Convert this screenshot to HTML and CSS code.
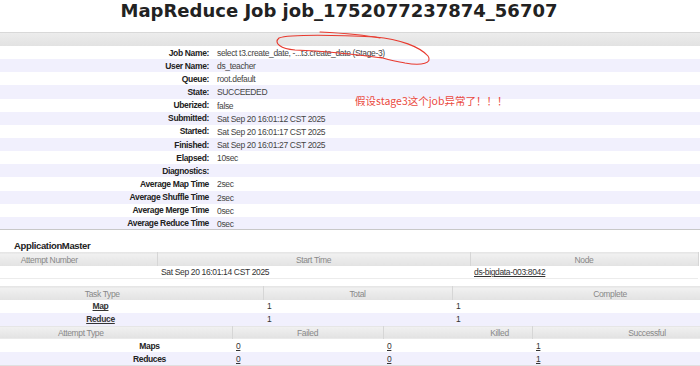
FILE: index.html
```html
<!DOCTYPE html>
<html lang="en">
<head>
  <meta charset="UTF-8">
  <meta name="viewport" content="width=device-width, initial-scale=1.0">
  <title>MapReduce Job job_1752077237874_56707</title>
  <link rel="stylesheet" href="styles.css">
</head>
<body>
  <div class="page">
    <h1 class="title">MapReduce Job job_1752077237874_56707</h1>

    <div class="info">
      <div class="info-head"></div>
      <table class="info-table">
        <tr><th>Job Name:</th><td>select t3.create_date, -...t3.create_date (Stage-3)</td></tr>
        <tr class="odd"><th>User Name:</th><td>ds_teacher</td></tr>
        <tr><th>Queue:</th><td>root.default</td></tr>
        <tr class="odd"><th>State:</th><td>SUCCEEDED</td></tr>
        <tr><th>Uberized:</th><td>false</td></tr>
        <tr class="odd"><th>Submitted:</th><td>Sat Sep 20 16:01:12 CST 2025</td></tr>
        <tr><th>Started:</th><td>Sat Sep 20 16:01:17 CST 2025</td></tr>
        <tr class="odd"><th>Finished:</th><td>Sat Sep 20 16:01:27 CST 2025</td></tr>
        <tr><th>Elapsed:</th><td>10sec</td></tr>
        <tr class="odd"><th>Diagnostics:</th><td></td></tr>
        <tr><th>Average Map Time</th><td>2sec</td></tr>
        <tr class="odd"><th>Average Shuffle Time</th><td>2sec</td></tr>
        <tr><th>Average Merge Time</th><td>0sec</td></tr>
        <tr class="odd"><th>Average Reduce Time</th><td>0sec</td></tr>
      </table>
    </div>

    <div class="am">
      <h3 class="am-title">ApplicationMaster</h3>
      <table class="grid am-table">
        <colgroup><col style="width:157px"><col style="width:313px"><col style="width:228px"></colgroup>
        <tr class="head"><th class="first">Attempt Number</th><th>Start Time</th><th>Node</th></tr>
        <tr class="last"><td></td><td>Sat Sep 20 16:01:14 CST 2025</td><td><a href="#">ds-bigdata-003:8042</a></td></tr>
      </table>
    </div>

    <div class="jobs">
      <table class="grid task-table">
        <colgroup><col style="width:263px"><col style="width:189px"><col style="width:316px"></colgroup>
        <tr class="head"><th class="first">Task Type</th><th>Total</th><th>Complete</th></tr>
        <tr><th class="name"><a href="#">Map</a></th><td>1</td><td>1</td></tr>
        <tr class="odd"><th class="name"><a href="#">Reduce</a></th><td>1</td><td>1</td></tr>
      </table>
      <table class="grid attempt-table">
        <colgroup><col style="width:232px"><col style="width:151px"><col style="width:149px"><col style="width:230px"></colgroup>
        <tr class="head"><th class="first wide">Attempt Type</th><th>Failed</th><th class="killed">Killed</th><th>Successful</th></tr>
        <tr><th class="kind">Maps</th><td><a href="#">0</a></td><td><a href="#">0</a></td><td><a href="#">1</a></td></tr>
        <tr class="odd"><th class="kind">Reduces</th><td><a href="#">0</a></td><td><a href="#">0</a></td><td><a href="#">1</a></td></tr>
      </table>
    </div>

    <svg class="scribble" width="700" height="366" viewBox="0 0 700 366">
      <path d="M382 58 C360 55, 320 51, 295 50 C281 49, 273 43, 279 38 C289 34, 340 35, 375 37 C400 39, 420 47, 428 56 C433 63, 422 66, 405 63 C395 61, 388 60, 380 57" />
      <path d="M320 32 C340 33, 360 34, 380 38" />
    </svg>
    <div class="note">假设stage3这个job异常了！！！</div>
  </div>
</body>
</html>
```

FILE: styles.css
```css
html, body {
  margin: 0;
  padding: 0;
  background-color: #fff;
  overflow: hidden;
}

.page {
  position: relative;
  width: 700px;
  height: 366px;
  overflow: hidden;
  font-family: "Liberation Sans", Arial, sans-serif;
  font-size: 8.5px;
  letter-spacing: -0.35px;
  color: #333;
}

.title {
  margin: 0;
  padding-right: 22px;
  height: 32px;
  line-height: 21px;
  text-align: center;
  font-family: "DejaVu Sans", sans-serif;
  font-size: 18px;
  font-weight: bold;
  letter-spacing: 0;
  color: #222;
}

.info-head {
  height: 13px;
  border-top: 1px solid #d8d8d8;
  background: linear-gradient(#ececec, #e2e2e2);
}

.info-table {
  width: 100%;
  border-collapse: collapse;
  border-bottom: 1px solid #c8c8c8;
}

.info-table tr {
  height: 13.15px;
}

.info-table th {
  width: 209px;
  padding: 0 7px 0 0;
  text-align: right;
  font-weight: bold;
  color: #222;
  white-space: nowrap;
}

.info-table td {
  padding: 1px 0 0 1px;
  color: #444;
  white-space: nowrap;
}

.odd {
  background-color: #f1f0fd;
}

.am {
  padding-top: 11px;
}

.am-title {
  margin: 0 0 2px 14px;
  font-size: 9.5px;
  line-height: 9px;
  font-weight: bold;
  color: #222;
}

.grid {
  table-layout: fixed;
  border-collapse: collapse;
}

.am-table {
  width: 698px;
}

.task-table {
  width: 768px;
  border-top: 1px solid #cfcfcf;
}

.attempt-table {
  width: 762px;
  border-bottom: 1px solid #e0e0e0;
}

.grid tr {
  height: 13px;
}

.grid .head th {
  padding: 0;
  font-weight: normal;
  color: #888;
  text-align: center;
  white-space: nowrap;
  background: linear-gradient(#f1f1f1, #e2e2e2);
  border-right: 1px solid #d6d6d6;
  border-top: 1px solid #e6e6e6;
}

.grid .head th.first {
  padding-right: 58px;
}

.grid .head th.wide {
  padding-right: 70px;
}

.grid .head th.killed {
  padding-left: 84px;
}

.grid td {
  padding: 0 0 0 4px;
  white-space: nowrap;
}

.am-table .last {
  border-bottom: 1px solid #ececec;
}

.jobs {
  padding-top: 7px;
}

.grid th.name {
  padding-right: 63px;
  text-align: center;
}

.grid th.kind {
  padding-left: 68px;
  text-align: center;
}

.grid th.name,
.grid th.kind {
  font-weight: bold;
  color: #222;
}

a {
  color: #333;
  text-decoration: underline;
}

.scribble {
  position: absolute;
  top: 0;
  left: 0;
  pointer-events: none;
}

.scribble path {
  fill: none;
  stroke: #e8392e;
  stroke-width: 1.1;
  stroke-linecap: round;
}

.note {
  position: absolute;
  top: 95px;
  left: 355px;
  font-family: "Noto Sans CJK SC", sans-serif;
  font-size: 10.5px;
  line-height: 12px;
  letter-spacing: 0;
  color: #ea4a3f;
}
```
